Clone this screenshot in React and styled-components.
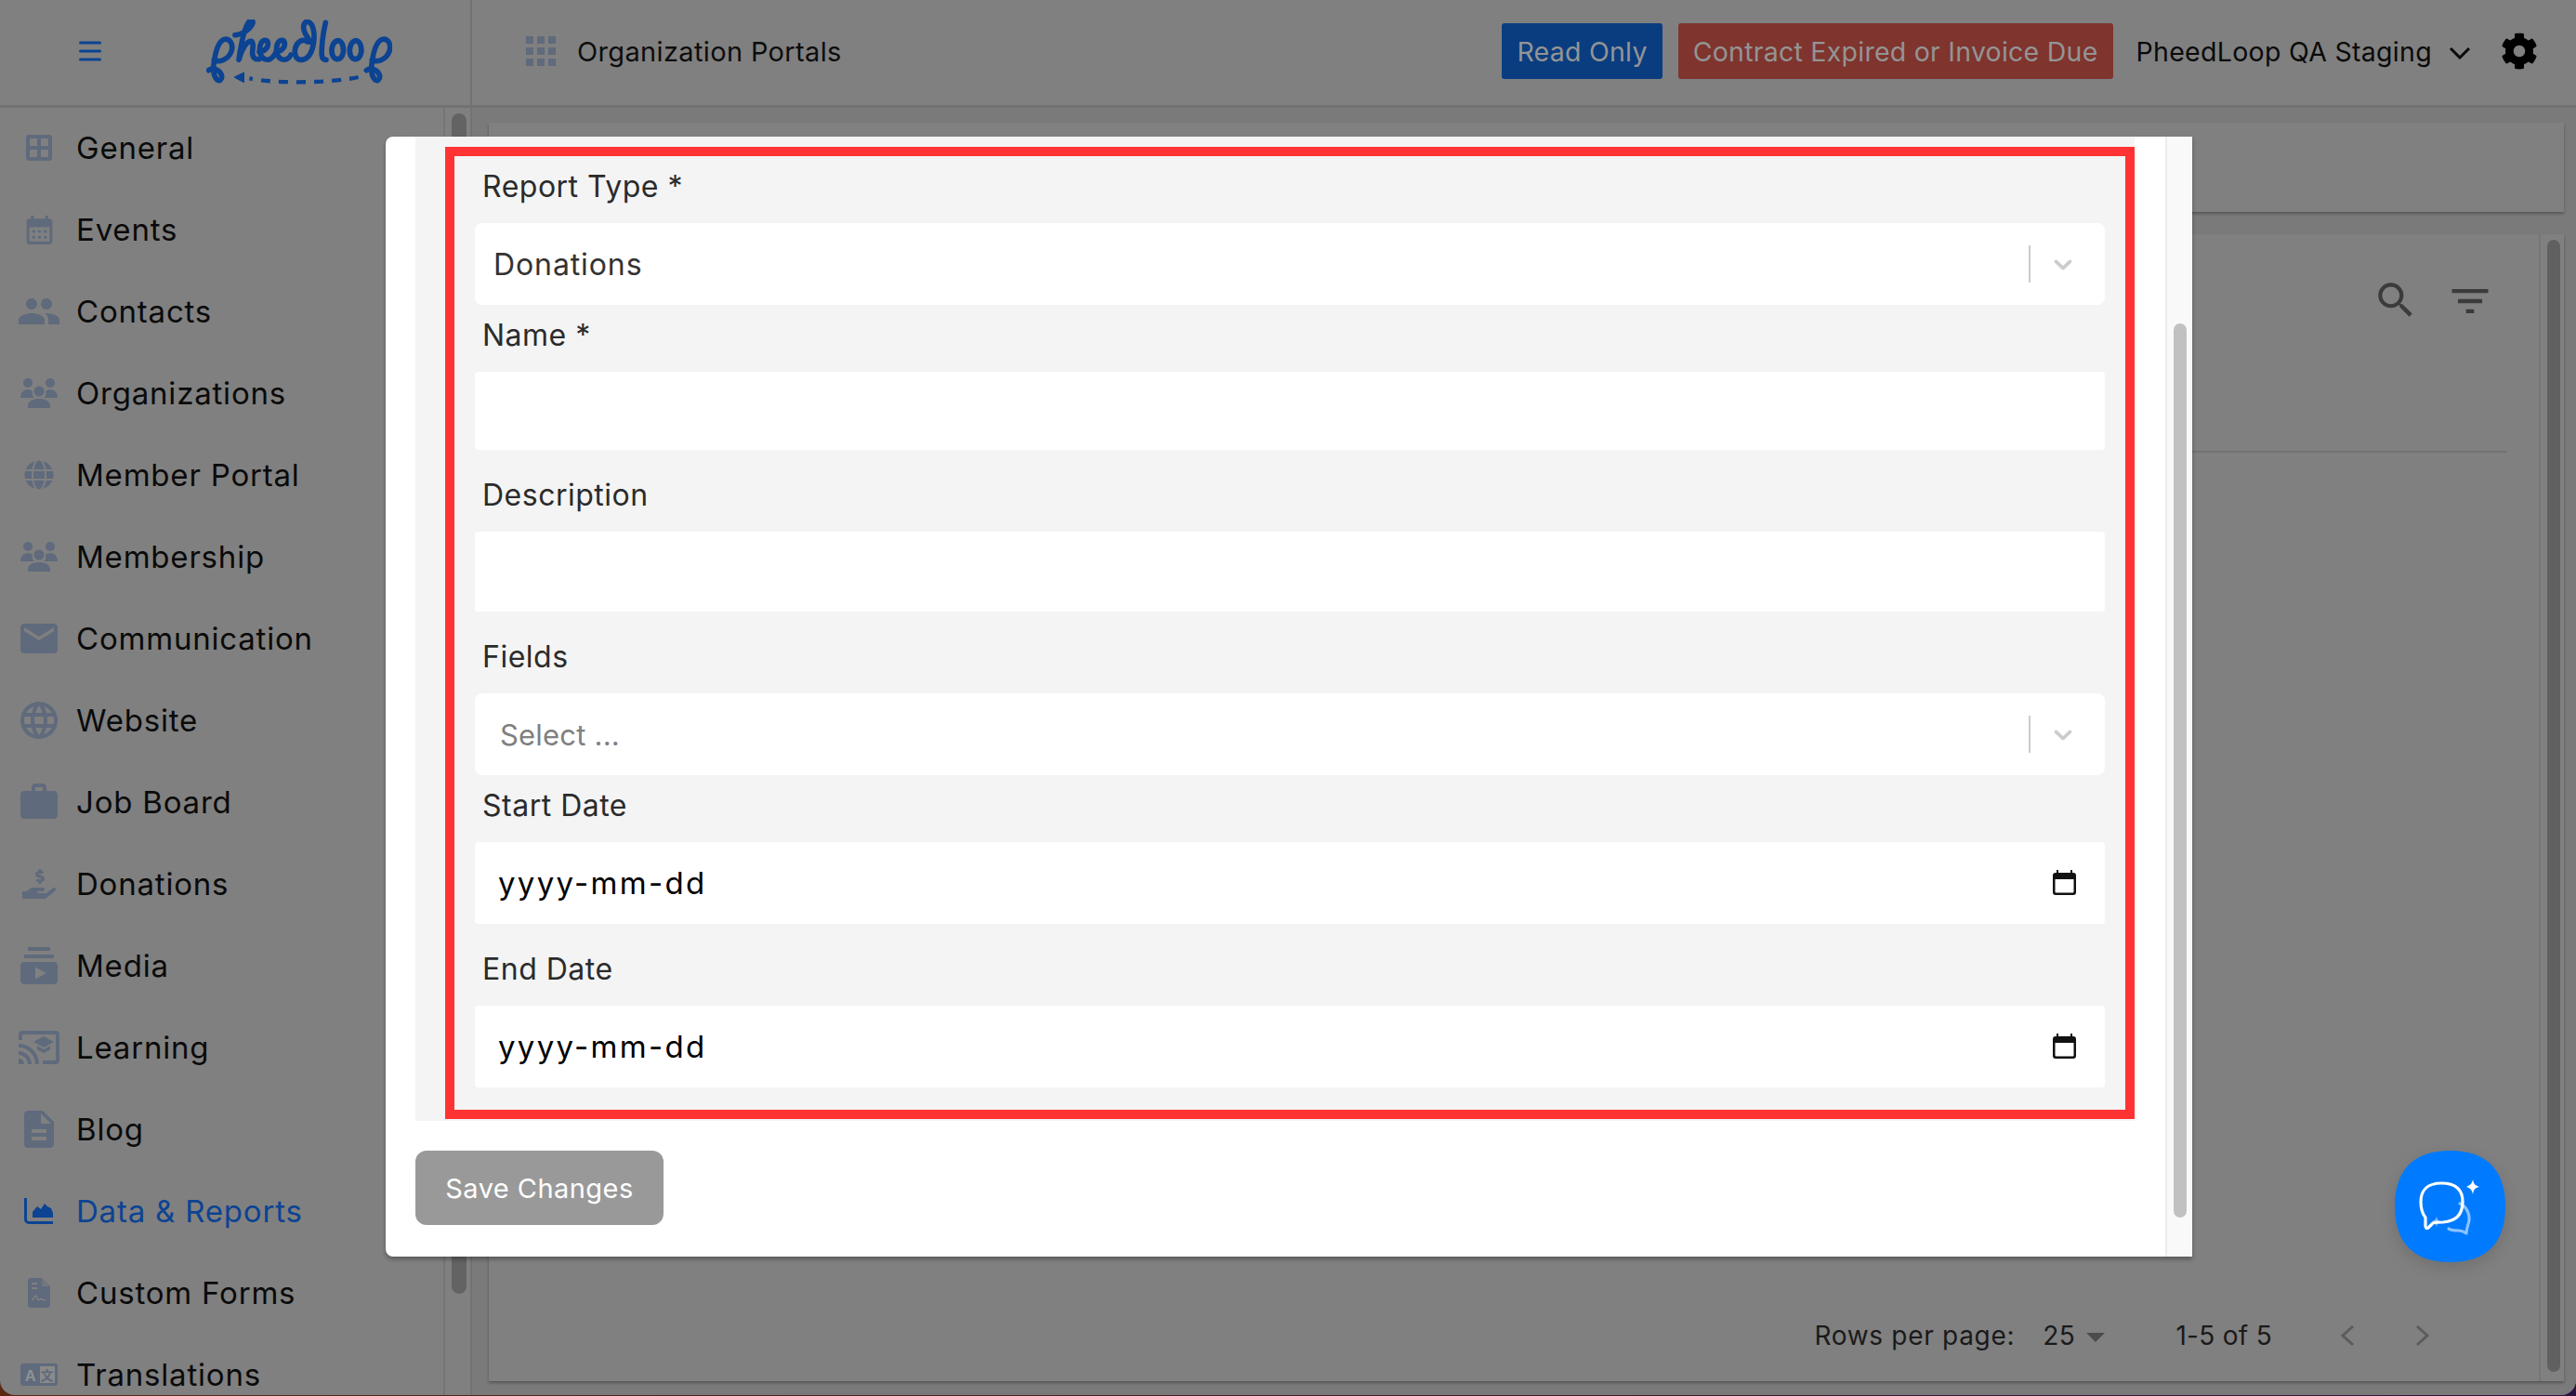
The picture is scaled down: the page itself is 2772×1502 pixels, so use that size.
import React from 'react'
import styled, { createGlobalStyle } from 'styled-components'
import {
  MdCalendarMonth, MdPeople, MdEmail, MdLanguage, MdWork,
  MdSubscriptions, MdCastForEducation, MdDescription, MdSearch, MdFilterList,
} from 'react-icons/md'
import { FaGlobe, FaHandHoldingUsd, FaCog } from 'react-icons/fa'

const FONT = `Inter, 'Liberation Sans', sans-serif`

const GlobalStyle = createGlobalStyle`
  html, body {
    margin: 0;
    padding: 0;
    height: 1502px;
    overflow: hidden;
    background: linear-gradient(90deg, #5a2a12, #2a1540);
  }
  * { box-sizing: border-box; }
`

const Shell = styled.div`
  position: relative;
  width: 2772px;
  height: 1501px;
  display: flex;
  flex-direction: column;
  overflow: hidden;
  border-radius: 0 0 16px 16px;
  background: #808080;
  font-family: ${FONT};
`

/* header */
const Header = styled.header`
  height: 116px;
  flex: none;
  display: flex;
  align-items: center;
  border-bottom: 3px solid #727272;
  padding: 0 41px 3px 0;
`

const Brand = styled.div`
  width: 508px;
  height: 116px;
  flex: none;
  display: flex;
  align-items: center;
  padding-left: 85px;
  border-right: 2px solid #727272;
`

const Burger = styled.svg`
  width: 24px;
  height: 22px;
  margin-right: 113px;
`

const Logo = styled.svg`
  width: 200px;
  height: 70px;
  margin-top: 1px;
`

const PortalLink = styled.div`
  display: flex;
  align-items: center;
  gap: 23px;
  margin-left: 58px;
  font-size: 29px;
  letter-spacing: 0.35px;
  color: #0d0d0d;
`

const Badge = styled.div`
  height: 60px;
  display: flex;
  align-items: center;
  padding: 0 16px;
  border-radius: 3px;
  font-size: 28.5px;
  letter-spacing: 0.25px;
  color: #949494;
  background: ${p => p.$bg};
  margin-left: ${p => p.$left || '17px'};
`

const OrgName = styled.div`
  margin-left: 25px;
  font-size: 28.5px;
  letter-spacing: 0.3px;
  color: #0a0a0a;
`

const OrgChevron = styled.svg`
  width: 24px;
  height: 14px;
  margin: 3px 32px 0 18px;
`

/* body */
const Body = styled.div`
  flex: 1;
  min-height: 0;
  display: flex;
`

const Sidebar = styled.aside`
  width: 508px;
  flex: none;
  display: flex;
  border-right: 2px solid #727272;
`

const Nav = styled.nav`
  flex: 1;
  overflow: hidden;
`

const NavItem = styled.div`
  height: 88px;
  padding-bottom: 2px;
  display: flex;
  align-items: center;
  font-size: 33px;
  letter-spacing: 0.8px;
  color: ${p => (p.$active ? '#0c4392' : '#0a0a0a')};
`

const IconSlot = styled.span`
  width: 82px;
  flex: none;
  display: flex;
  align-items: center;
  justify-content: center;
  margin-left: 1px;
  margin-right: -1px;
  color: ${p => (p.$active ? '#0c4392' : '#5f6a7c')};
`

const SideGutter = styled.div`
  width: 29px;
  flex: none;
  padding: 6px 7px 0;
  border-left: 2px solid #757575;
`

const SideThumb = styled.div`
  width: 16px;
  height: 1270px;
  border-radius: 8px;
  background: #636363;
`

const Main = styled.main`
  flex: 1;
  min-width: 0;
  display: flex;
  flex-direction: column;
  gap: 24px;
  padding: 16px 13px 15px 18px;
  background: #7a7a7a;
`

const Card = styled.section`
  background: #808080;
  box-shadow: 0 2px 3px rgba(0, 0, 0, 0.3);
`

const TopCard = styled(Card)`
  height: 96px;
  flex: none;
`

const ListCard = styled(Card)`
  flex: 1;
  min-height: 0;
  display: flex;
`

const ListContent = styled.div`
  flex: 1;
  min-width: 0;
  display: flex;
  flex-direction: column;
  justify-content: space-between;
`

const Toolbar = styled.div`
  height: 235px;
  margin-right: 34px;
  display: flex;
  justify-content: flex-end;
  gap: 29px;
  padding: 46px 14px 0 0;
  color: #3b3b3b;
  border-bottom: 2px solid #727272;
`

const Pagination = styled.div`
  height: 98px;
  display: flex;
  align-items: center;
  justify-content: flex-end;
  padding-right: 117px;
  font-size: 28px;
  color: #1a1a1a;
`

const RowsLabel = styled.span`
  letter-spacing: 0.7px;
`

const RowsValue = styled.span`
  margin-left: 30px;
  letter-spacing: 0.5px;
`

const Caret = styled.span`
  margin: 4px 76px 0 12px;
  border-left: 10px solid transparent;
  border-right: 10px solid transparent;
  border-top: 10px solid #4c4c4c;
`

const PageRange = styled.span`
  margin-right: 73px;
  letter-spacing: 0.3px;
`

const PageArrow = styled.svg`
  width: 16px;
  height: 24px;
  margin-left: ${p => p.$left || '0'};
`

const ListGutter = styled.div`
  width: 27px;
  flex: none;
  padding: 6px 4px 10px 7px;
  border-left: 2px solid #767676;
`

const ListThumb = styled.div`
  height: 100%;
  border-radius: 8px;
  background: #606060;
`

/* modal */
const Modal = styled.div`
  position: absolute;
  left: 415px;
  top: 147px;
  width: 1944px;
  height: 1205px;
  display: flex;
  background: #fff;
  border-radius: 8px 0 0 8px;
  box-shadow: 0 3px 5px rgba(0, 0, 0, 0.3);
`

const ModalScroll = styled.div`
  flex: 1;
  min-width: 0;
  padding: 0 33px 0 32px;
`

const FormPanel = styled.div`
  background: #f4f4f4;
  padding: 11px 0 2px 32px;
`

const Highlight = styled.form`
  border: 10px solid #ff3333;
  padding: 0 22px 24px;
`

const Field = styled.div`
  margin-bottom: ${p => (p.$spaced ? '16px' : '0')};
`

const Label = styled.div`
  height: 72px;
  display: flex;
  align-items: center;
  padding: 0 0 8px 8px;
  font-size: 32px;
  letter-spacing: 0.5px;
  color: #2b2b2b;
`

const Control = styled.div`
  height: ${p => p.$h}px;
  display: flex;
  align-items: center;
  background: #fff;
  border-radius: ${p => (p.$select ? '8px' : '4px')};
`

const SelectValue = styled.span`
  flex: 1;
  padding-left: ${p => (p.$placeholder ? '27px' : '20px')};
  font-size: ${p => (p.$placeholder ? '31px' : '32px')};
  letter-spacing: ${p => (p.$placeholder ? '0.2px' : '0.9px')};
  color: ${p => (p.$placeholder ? '#808080' : '#333')};
`

const SelectSep = styled.span`
  width: 2px;
  height: 40px;
  background: #ccc;
`

const SelectChevron = styled.svg`
  width: 32px;
  height: 32px;
  margin: 0 29px 0 19px;
  fill: #ccc;
`

const TextInput = styled.input`
  width: 100%;
  height: 100%;
  border: 0;
  outline: 0;
  background: transparent;
  padding: 0 24px;
  font: 31px ${FONT};
`

const DateText = styled.span`
  flex: 1;
  padding: 0 0 1px 25px;
  font-size: 33px;
  letter-spacing: 2.3px;
  color: #000;
`

const CalendarIcon = styled.svg`
  width: 25px;
  height: 27px;
  margin: 0 31px 2px 0;
`

const SaveButton = styled.button`
  display: block;
  width: 267px;
  height: 80px;
  margin-top: 32px;
  border: 0;
  border-radius: 12px;
  background: #999;
  color: #fff;
  font: 29px ${FONT};
  letter-spacing: 0.45px;
`

const ModalGutter = styled.div`
  width: 29px;
  flex: none;
  padding: 201px 6px 42px 7px;
  background: #f9f9f9;
  border-left: 2px solid #ececec;
`

const ModalThumb = styled.div`
  height: 100%;
  border-radius: 8px;
  background: #c1c1c1;
`

const ChatButton = styled.button`
  position: absolute;
  left: 2577px;
  top: 1238px;
  width: 119px;
  height: 120px;
  padding: 0;
  border: 0;
  background: transparent;
  filter: drop-shadow(0 6px 8px rgba(0, 0, 0, 0.12));
`

const CHEVRON_D = 'M4.516 7.548c0.436-0.446 1.043-0.481 1.576 0l3.908 3.747 3.908-3.747c0.533-0.481 1.141-0.446 1.574 0 0.436 0.445 0.408 1.197 0 1.615-0.406 0.418-4.695 4.502-4.695 4.502-0.217 0.223-0.502 0.335-0.787 0.335s-0.57-0.112-0.789-0.335c0 0-4.287-4.084-4.695-4.502s-0.436-1.17 0-1.615z'

const PanesIcon = () => (
  <svg width="28" height="28" viewBox="0 0 28 28">
    <path
      d="M3 0h22a3 3 0 0 1 3 3v22a3 3 0 0 1-3 3H3a3 3 0 0 1-3-3V3a3 3 0 0 1 3-3zM4 4v8h8V4zm12 0v8h8V4zM4 16v8h8v-8zm12 0v8h8v-8z"
      fill="currentColor"
      fillRule="evenodd"
    />
  </svg>
)

const TeamIcon = () => (
  <svg width="40" height="32" viewBox="0 0 40 32" fill="currentColor">
    <circle cx="8" cy="5" r="5" />
    <circle cx="32" cy="5" r="5" />
    <circle cx="20" cy="14" r="5.500" />
    <path d="M0 21c0-6 4-9 8-9 2 0 4 1 5 2-1 3 0 6 2 7H0zM40 21c0-6-4-9-8-9-2 0-4 1-5 2 1 3 0 6-2 7h15z" />
    <path d="M8 32v-2c0-6 6-8 12-8s12 2 12 8v2z" />
  </svg>
)

const ChartIcon = () => (
  <svg width="32" height="28" viewBox="0 0 32 28" fill="currentColor">
    <path d="M1.500 0v23a3.500 3.500 0 0 0 3.500 3.500h26" fill="none" stroke="currentColor" strokeWidth="3" />
    <path d="M9 21v-6l5-6 4 3 4-6 3 3 4 2 2 5v5z" />
  </svg>
)

const FormFileIcon = () => (
  <svg width="24" height="32" viewBox="0 0 24 32">
    <path d="M3 0h12l9 9v20a3 3 0 0 1-3 3H3a3 3 0 0 1-3-3V3a3 3 0 0 1 3-3z" fill="currentColor" />
    <path d="M15 0v9h9" fill="#808080" opacity="0.55" />
    <path d="M4 6h6M4 11h6" stroke="#808080" strokeWidth="2" />
    <path d="M4 24c2 0 3-5 4.500-5s1 4.500 3 4.500 2-1.500 3-1 2 1.500 5 1.500" fill="none" stroke="#808080" strokeWidth="1.600" />
  </svg>
)

const TranslateIcon = () => (
  <svg width="40" height="24" viewBox="0 0 40 24">
    <rect width="40" height="24" rx="3" fill="currentColor" />
    <rect x="21" y="3" width="16" height="18" fill="#8a8a8a" />
    <text x="11" y="19" textAnchor="middle" fontSize="16" fontWeight="700" fill="#8f8f8f" fontFamily="Inter, sans-serif">A</text>
    <text x="29" y="18" textAnchor="middle" fontSize="14" fontWeight="700" fill="#5f6a7c" fontFamily="'Noto Sans CJK SC', sans-serif">文</text>
  </svg>
)

const NAV_ITEMS = [
  { label: 'General', icon: <PanesIcon /> },
  { label: 'Events', icon: <MdCalendarMonth size={37} /> },
  { label: 'Contacts', icon: <MdPeople size={48} /> },
  { label: 'Organizations', icon: <TeamIcon /> },
  { label: 'Member Portal', icon: <FaGlobe size={32} /> },
  { label: 'Membership', icon: <TeamIcon /> },
  { label: 'Communication', icon: <MdEmail size={48} /> },
  { label: 'Website', icon: <MdLanguage size={48} /> },
  { label: 'Job Board', icon: <MdWork size={48} /> },
  { label: 'Donations', icon: <FaHandHoldingUsd size={36} /> },
  { label: 'Media', icon: <MdSubscriptions size={48} /> },
  { label: 'Learning', icon: <MdCastForEducation size={48} /> },
  { label: 'Blog', icon: <MdDescription size={48} /> },
  { label: 'Data & Reports', icon: <ChartIcon />, active: true },
  { label: 'Custom Forms', icon: <FormFileIcon /> },
  { label: 'Translations', icon: <TranslateIcon /> },
]

const PheedLogo = () => (
  <Logo viewBox="65 60 600 210" fill="none" stroke="#0c4392" strokeWidth="17" strokeLinecap="round" strokeLinejoin="round">
    <path d="M72 224c20-15 48 8 42 26-10 20-30-5-25-45 3-25 11-70 31-80 20-7 35 15 25 40-10 25-40 35-55 25" />
    <path d="M158 110c22 0 48-18 56-36 4-10-6-14-12-6-16 22-26 80-32 122 8-30 24-60 38-60 12 0 6 24 6 38 0 14 8 22 22 20" />
    <path d="M236 164c16 0 30-14 28-28-2-12-16-12-22 0-8 16-6 44 12 52 12 5 24-2 32-16" />
    <path d="M290 164c16 0 30-14 28-28-2-12-16-12-22 0-8 16-6 44 12 52 12 5 24-2 30-14" />
    <path d="M392 132c-16-12-36 0-40 22-4 20 4 38 22 36 24-3 34-30 38-58 3-26 0-58-18-64-14-4-20 16-10 36 6 12 12 18 16 28" />
    <path d="M450 70c-8 32-14 82-12 106 1 10 6 14 14 14" />
    <path d="M490 128c-16 2-24 26-18 46 5 16 24 20 32 2 8-18 2-46-14-48z" />
    <path d="M548 128c-16 2-24 26-18 46 5 16 24 20 32 2 8-18 2-46-14-48z" />
    <path d="M582 224c20-15 48 8 42 26-10 20-30-5-25-45 3-25 11-70 31-80 20-7 35 15 25 40-10 25-40 35-55 25" />
    <path d="M556 246c-86 19-266 22-352 4" strokeWidth="13" strokeDasharray="30 27" strokeLinecap="butt" />
    <path d="M186 232l-30 14 30 16z" fill="#0c4392" stroke="#0c4392" strokeWidth="4" />
  </Logo>
)

const GridIcon = () => (
  <svg width="32" height="32" viewBox="0 0 32 32" fill="#5f6a7c">
    {[0, 12, 24].flatMap(y => [0, 12, 24].map(x => (
      <rect key={`${x}-${y}`} x={x} y={y} width="8" height="8" />
    )))}
  </svg>
)

const ChatIcon = () => (
  <svg width="119" height="120" viewBox="0 0 119 120">
    <path d="M59.500 0C100 0 119 22 119 60s-19 60-59.500 60S0 98 0 60 19 0 59.500 0z" fill="#007aff" />
    <path d="M33 72c-4-5-5-11-5-17 0-13 8-20 22-20 14 0 23 6 23 20 0 14-8 21-21 22-5 0-8 0-11 1l-5 5c-2 1-3 0-3-2z" fill="none" stroke="#fff" strokeWidth="3.200" strokeLinejoin="round" />
    <path d="M84 31c1 5 2 6 7 8-5 1-6 3-7 8-1-5-3-7-7-8 4-2 6-3 7-8z" fill="#fff" />
    <path d="M45 70c1 4 1 4 5 5-4 1-4 2-5 6-1-4-2-5-5-6 3-1 4-1 5-5z" fill="#fff" opacity="0.55" transform="translate(0 1)" />
    <path d="M70 57c8 3 12 14 9 22-1 4-2 6-2 10-3-2-5-3-8-3-5 0-9 0-11-2" fill="none" stroke="#fff" strokeOpacity="0.55" strokeWidth="3.200" strokeLinecap="round" strokeLinejoin="round" />
  </svg>
)

const SelectField = ({ label, value, placeholder, h }) => (
  <Field>
    <Label>{label}</Label>
    <Control $select $h={h}>
      <SelectValue $placeholder={placeholder}>{value}</SelectValue>
      <SelectSep />
      <SelectChevron viewBox="0 0 20 20"><path d={CHEVRON_D} /></SelectChevron>
    </Control>
  </Field>
)

const InputField = ({ label, h, spaced }) => (
  <Field $spaced={spaced}>
    <Label>{label}</Label>
    <Control $h={h}><TextInput type="text" /></Control>
  </Field>
)

const DateField = ({ label, h, spaced }) => (
  <Field $spaced={spaced}>
    <Label>{label}</Label>
    <Control $h={h}>
      <DateText>yyyy-mm-dd</DateText>
      <CalendarIcon viewBox="0 0 25 27">
        <path d="M6 0v3h13V0h2v3h1a3 3 0 0 1 3 3v18a3 3 0 0 1-3 3H3a3 3 0 0 1-3-3V6a3 3 0 0 1 3-3h1V0zM2.500 10v13.500a1 1 0 0 0 1 1h18a1 1 0 0 0 1-1V10z" fill="#111" fillRule="evenodd" />
      </CalendarIcon>
    </Control>
  </Field>
)

const App = () => (
  <>
    <GlobalStyle />
    <Shell>
      <Header>
        <Brand>
          <Burger viewBox="0 0 24 22">
            <path d="M1.500 2h21M1.500 11h21M1.500 20h21" stroke="#0c4392" strokeWidth="3" strokeLinecap="round" />
          </Burger>
          <PheedLogo />
        </Brand>
        <PortalLink><GridIcon />Organization Portals</PortalLink>
        <Badge $bg="#0a3d80" $left="auto">Read Only</Badge>
        <Badge $bg="#7f342e">Contract Expired or Invoice Due</Badge>
        <OrgName>PheedLoop QA Staging</OrgName>
        <OrgChevron viewBox="0 0 24 14">
          <path d="M2 2l10 10L22 2" fill="none" stroke="#0a0a0a" strokeWidth="3" />
        </OrgChevron>
        <FaCog size={40} color="#000" />
      </Header>
      <Body>
        <Sidebar>
          <Nav>
            {NAV_ITEMS.map(item => (
              <NavItem key={item.label} $active={item.active}>
                <IconSlot $active={item.active}>{item.icon}</IconSlot>
                {item.label}
              </NavItem>
            ))}
          </Nav>
          <SideGutter><SideThumb /></SideGutter>
        </Sidebar>
        <Main>
          <TopCard />
          <ListCard>
            <ListContent>
              <Toolbar>
                <MdSearch size={50} />
                <MdFilterList size={52} />
              </Toolbar>
              <Pagination>
                <RowsLabel>Rows per page:</RowsLabel>
                <RowsValue>25</RowsValue>
                <Caret />
                <PageRange>1-5 of 5</PageRange>
                <PageArrow viewBox="0 0 16 24">
                  <path d="M14 2L3 12l11 10" fill="none" stroke="#5c5c5c" strokeWidth="3" />
                </PageArrow>
                <PageArrow viewBox="0 0 16 24" $left="65px">
                  <path d="M2 2l11 10L2 22" fill="none" stroke="#5c5c5c" strokeWidth="3" />
                </PageArrow>
              </Pagination>
            </ListContent>
            <ListGutter><ListThumb /></ListGutter>
          </ListCard>
        </Main>
      </Body>
      <Modal>
        <ModalScroll>
          <FormPanel>
            <Highlight>
              <SelectField label="Report Type *" value="Donations" h={88} />
              <InputField label="Name *" h={84} spaced />
              <InputField label="Description" h={86} spaced />
              <SelectField label="Fields" value="Select ..." placeholder h={88} />
              <DateField label="Start Date" h={88} spaced />
              <DateField label="End Date" h={88} />
            </Highlight>
          </FormPanel>
          <SaveButton type="button">Save Changes</SaveButton>
        </ModalScroll>
        <ModalGutter><ModalThumb /></ModalGutter>
      </Modal>
      <ChatButton type="button"><ChatIcon /></ChatButton>
    </Shell>
  </>
)

export default App
